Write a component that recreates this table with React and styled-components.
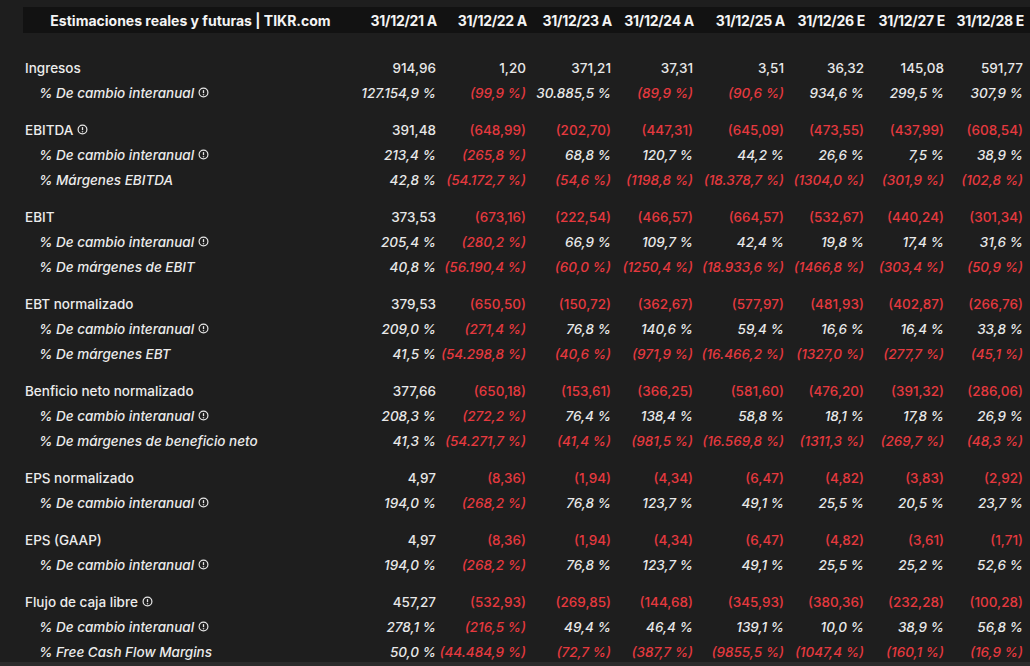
import React from "react"
import styled, { createGlobalStyle } from "styled-components"

const GlobalStyle = createGlobalStyle`
    html, body {
        margin: 0;
        padding: 0;
        background: #1e1e1e;
    }
    body {
        font-family: Inter, "Liberation Sans", sans-serif;
        color: #e8e8e8;
    }
`

const COLS = "335px 80px 90px 85px 82px 91px 80px 80px 79px"

const Page = styled.div`
    width: 1030px;
    height: 666px;
    overflow: hidden;
    padding: 7px 0 0 23px;
    box-sizing: border-box;
    position: relative;
`

const Header = styled.div`
    display: grid;
    grid-template-columns: ${COLS};
    height: 26px;
    align-items: center;
    background: #121212;
    font-weight: 700;
    font-size: 14px;
    color: #f4f4f4;
    margin-bottom: 22px;
`

const HeadTitle = styled.div`
    text-align: center;
    white-space: nowrap;
`

const HeadCell = styled.div`
    text-align: right;
    white-space: nowrap;
    padding-right: 1px;
    letter-spacing: -0.3px;
`

const Group = styled.div`
    margin-bottom: 12px;
`

const Row = styled.div`
    display: grid;
    grid-template-columns: ${COLS};
    height: 25px;
    align-items: center;
    font-size: 13.5px;
    font-weight: 500;
    font-style: ${(p) => (p.$sub ? "italic" : "normal")};
`

const Label = styled.div`
    display: flex;
    align-items: center;
    gap: 4px;
    padding-left: ${(p) => (p.$sub ? 16 : 2)}px;
    white-space: nowrap;
    color: #ececec;
`

const Cell = styled.div`
    text-align: right;
    white-space: nowrap;
    padding-right: 2px;
    color: ${(p) => (p.$neg ? "#e5393f" : "#e8e8e8")};
`

const Info = styled.svg`
    width: 11px;
    height: 11px;
    flex: none;
`

const BottomEdge = styled.div`
    position: absolute;
    left: 0;
    right: 0;
    bottom: 0;
    height: 4px;
    background: #2b2b2b;
`

const InfoIcon = () => (
    <Info viewBox="0 0 12 12" fill="none" stroke="#e8e8e8">
        <circle cx="6" cy="6" r="4.8" strokeWidth="1.3" />
        <line x1="6" y1="3.4" x2="6" y2="6.6" strokeWidth="1.4" />
        <circle cx="6" cy="8.4" r="0.5" fill="#e8e8e8" strokeWidth="0.7" />
    </Info>
)

const dates = [
    "31/12/21 A", "31/12/22 A", "31/12/23 A", "31/12/24 A",
    "31/12/25 A", "31/12/26 E", "31/12/27 E", "31/12/28 E",
]

const groups = [
    [
        { label: "Ingresos", values: ["914,96", "1,20", "371,21", "37,31", "3,51", "36,32", "145,08", "591,77"] },
        { label: "% De cambio interanual", sub: true, info: true, values: ["127.154,9 %", "(99,9 %)", "30.885,5 %", "(89,9 %)", "(90,6 %)", "934,6 %", "299,5 %", "307,9 %"] },
    ],
    [
        { label: "EBITDA", info: true, values: ["391,48", "(648,99)", "(202,70)", "(447,31)", "(645,09)", "(473,55)", "(437,99)", "(608,54)"] },
        { label: "% De cambio interanual", sub: true, info: true, values: ["213,4 %", "(265,8 %)", "68,8 %", "120,7 %", "44,2 %", "26,6 %", "7,5 %", "38,9 %"] },
        { label: "% Márgenes EBITDA", sub: true, values: ["42,8 %", "(54.172,7 %)", "(54,6 %)", "(1198,8 %)", "(18.378,7 %)", "(1304,0 %)", "(301,9 %)", "(102,8 %)"] },
    ],
    [
        { label: "EBIT", values: ["373,53", "(673,16)", "(222,54)", "(466,57)", "(664,57)", "(532,67)", "(440,24)", "(301,34)"] },
        { label: "% De cambio interanual", sub: true, info: true, values: ["205,4 %", "(280,2 %)", "66,9 %", "109,7 %", "42,4 %", "19,8 %", "17,4 %", "31,6 %"] },
        { label: "% De márgenes de EBIT", sub: true, values: ["40,8 %", "(56.190,4 %)", "(60,0 %)", "(1250,4 %)", "(18.933,6 %)", "(1466,8 %)", "(303,4 %)", "(50,9 %)"] },
    ],
    [
        { label: "EBT normalizado", values: ["379,53", "(650,50)", "(150,72)", "(362,67)", "(577,97)", "(481,93)", "(402,87)", "(266,76)"] },
        { label: "% De cambio interanual", sub: true, info: true, values: ["209,0 %", "(271,4 %)", "76,8 %", "140,6 %", "59,4 %", "16,6 %", "16,4 %", "33,8 %"] },
        { label: "% De márgenes EBT", sub: true, values: ["41,5 %", "(54.298,8 %)", "(40,6 %)", "(971,9 %)", "(16.466,2 %)", "(1327,0 %)", "(277,7 %)", "(45,1 %)"] },
    ],
    [
        { label: "Benficio neto normalizado", values: ["377,66", "(650,18)", "(153,61)", "(366,25)", "(581,60)", "(476,20)", "(391,32)", "(286,06)"] },
        { label: "% De cambio interanual", sub: true, info: true, values: ["208,3 %", "(272,2 %)", "76,4 %", "138,4 %", "58,8 %", "18,1 %", "17,8 %", "26,9 %"] },
        { label: "% De márgenes de beneficio neto", sub: true, values: ["41,3 %", "(54.271,7 %)", "(41,4 %)", "(981,5 %)", "(16.569,8 %)", "(1311,3 %)", "(269,7 %)", "(48,3 %)"] },
    ],
    [
        { label: "EPS normalizado", values: ["4,97", "(8,36)", "(1,94)", "(4,34)", "(6,47)", "(4,82)", "(3,83)", "(2,92)"] },
        { label: "% De cambio interanual", sub: true, info: true, values: ["194,0 %", "(268,2 %)", "76,8 %", "123,7 %", "49,1 %", "25,5 %", "20,5 %", "23,7 %"] },
    ],
    [
        { label: "EPS (GAAP)", values: ["4,97", "(8,36)", "(1,94)", "(4,34)", "(6,47)", "(4,82)", "(3,61)", "(1,71)"] },
        { label: "% De cambio interanual", sub: true, info: true, values: ["194,0 %", "(268,2 %)", "76,8 %", "123,7 %", "49,1 %", "25,5 %", "25,2 %", "52,6 %"] },
    ],
    [
        { label: "Flujo de caja libre", info: true, values: ["457,27", "(532,93)", "(269,85)", "(144,68)", "(345,93)", "(380,36)", "(232,28)", "(100,28)"] },
        { label: "% De cambio interanual", sub: true, info: true, values: ["278,1 %", "(216,5 %)", "49,4 %", "46,4 %", "139,1 %", "10,0 %", "38,9 %", "56,8 %"] },
        { label: "% Free Cash Flow Margins", sub: true, values: ["50,0 %", "(44.484,9 %)", "(72,7 %)", "(387,7 %)", "(9855,5 %)", "(1047,4 %)", "(160,1 %)", "(16,9 %)"] },
    ],
]

export default function App() {
    return (
        <>
            <GlobalStyle />
            <Page>
                <Header>
                    <HeadTitle>Estimaciones reales y futuras | TIKR.com</HeadTitle>
                    {dates.map((d) => (
                        <HeadCell key={d}>{d}</HeadCell>
                    ))}
                </Header>

                {groups.map((rows, gi) => (
                    <Group key={gi}>
                        {rows.map((r, ri) => (
                            <Row key={ri} $sub={r.sub}>
                                <Label $sub={r.sub}>
                                    {r.label}
                                    {r.info && <InfoIcon />}
                                </Label>
                                {r.values.map((v, vi) => (
                                    <Cell key={vi} $neg={v.startsWith("(")}>{v}</Cell>
                                ))}
                            </Row>
                        ))}
                    </Group>
                ))}
                <BottomEdge />
            </Page>
        </>
    )
}
